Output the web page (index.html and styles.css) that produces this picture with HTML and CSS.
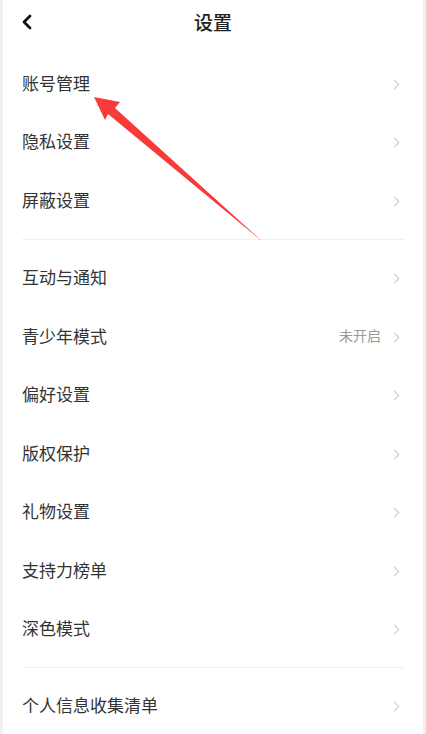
FILE: index.html
```html
<!DOCTYPE html>
<html lang="zh">
<head>
<meta charset="utf-8">
<link rel="stylesheet" href="styles.css">
</head>
<body>
<div class="page">
  <header class="nav">
    <svg class="back" width="12" height="16" viewBox="0 0 12 16"><path d="M9 2 L3 8 L9 14" fill="none" stroke="#111" stroke-width="2.8" stroke-linecap="round" stroke-linejoin="round"/></svg>
    <div class="title">设置</div>
  </header>
  <section class="group g1">
    <div class="row"><span class="label">账号管理</span><span class="chev"></span></div>
    <div class="row"><span class="label">隐私设置</span><span class="chev"></span></div>
    <div class="row"><span class="label">屏蔽设置</span><span class="chev"></span></div>
  </section>
  <div class="sep"></div>
  <section class="group g2">
    <div class="row"><span class="label">互动与通知</span><span class="chev"></span></div>
    <div class="row"><span class="label">青少年模式</span><span class="value">未开启</span><span class="chev"></span></div>
    <div class="row"><span class="label">偏好设置</span><span class="chev"></span></div>
    <div class="row"><span class="label">版权保护</span><span class="chev"></span></div>
    <div class="row"><span class="label">礼物设置</span><span class="chev"></span></div>
    <div class="row"><span class="label">支持力榜单</span><span class="chev"></span></div>
    <div class="row"><span class="label">深色模式</span><span class="chev"></span></div>
  </section>
  <div class="sep"></div>
  <section class="group g3">
    <div class="row"><span class="label">个人信息收集清单</span><span class="chev"></span></div>
  </section>
  <svg class="arrow" width="426" height="734" viewBox="0 0 426 734"><polygon points="94,97 120,102 115,108 263,242 108,114 105,120" fill="#f93a3a"/></svg>
</div>
</body>
</html>
```
FILE: styles.css
```css
html, body {
  margin: 0;
  padding: 0;
  background: #efefef;
}
.page {
  position: relative;
  margin: 0 3px;
  height: 734px;
  background: #fff;
  overflow: hidden;
  font-family: "Noto Sans CJK SC", "Noto Sans", sans-serif;
  color: #333;
}
.nav {
  position: relative;
  height: 42px;
  display: flex;
  align-items: center;
  justify-content: center;
  padding-bottom: 2px;
}
.back {
  position: absolute;
  left: 18px;
  top: 14px;
}
.title {
  font-size: 19px;
  font-weight: 500;
  color: #222;
}
.group {
  display: flex;
  flex-direction: column;
}
.g1 { padding: 11px 0 8px; }
.g2 { padding: 10px 0 8px; }
.g3 { padding: 9px 0 0; }
.row {
  height: 58.5px;
  display: flex;
  align-items: center;
  padding: 0 23px 0 19px;
}
.label {
  flex: 1;
  font-size: 17px;
  color: #333;
  position: relative;
  top: -2px;
}
.value {
  font-size: 14px;
  color: #9a9a9a;
  margin-right: 10px;
  position: relative;
  top: -2px;
}
.chev {
  width: 6px;
  height: 6px;
  border-top: 1.5px solid #c8c8c8;
  border-right: 1.5px solid #c8c8c8;
  transform: rotate(45deg);
  margin-right: 2px;
}
.sep {
  height: 1px;
  background: #f0f0f0;
  margin: 0 19px;
}
.arrow {
  position: absolute;
  left: -3px;
  top: 0;
  pointer-events: none;
}
```
